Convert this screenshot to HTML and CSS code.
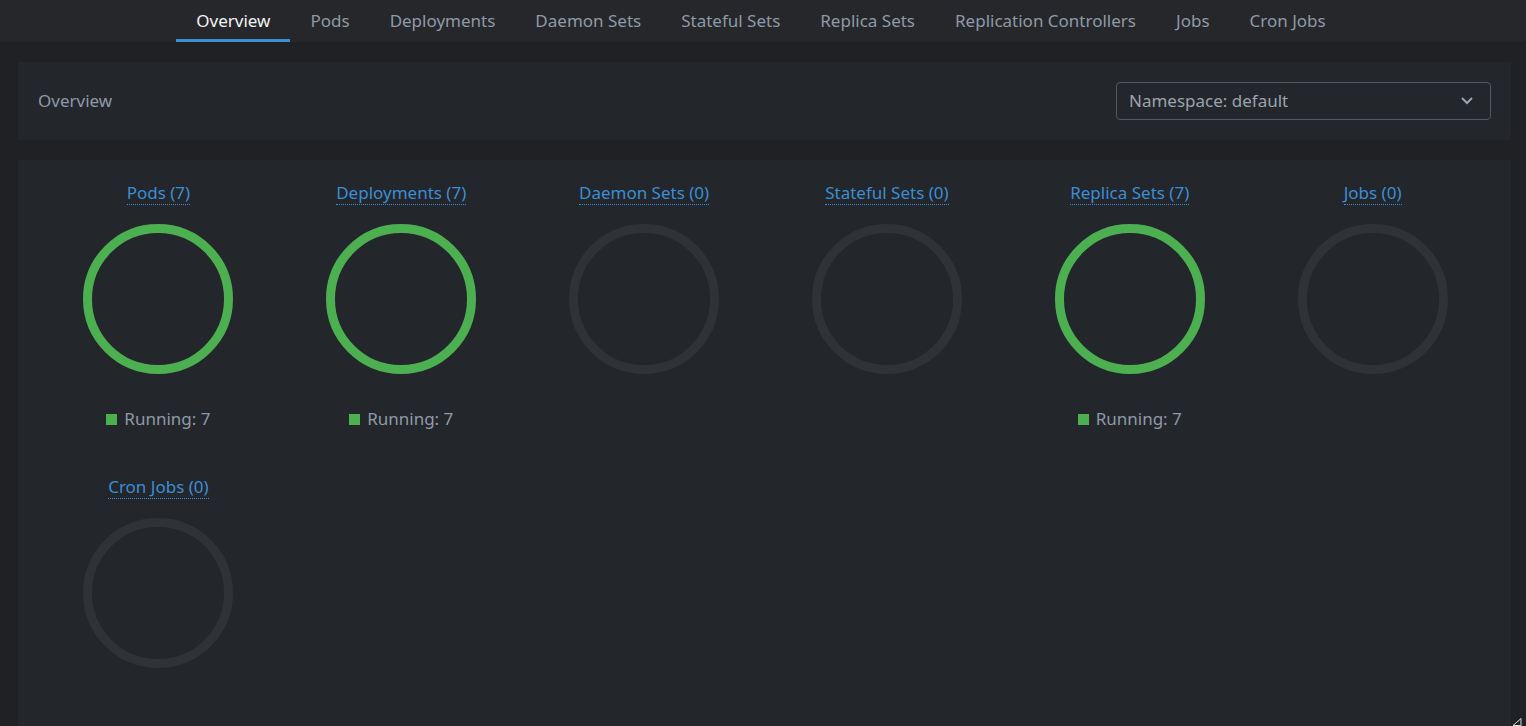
FILE: index.html
```html
<!DOCTYPE html>
<html lang="en">
<head>
<meta charset="utf-8">
<title>Workloads Overview</title>
<link rel="stylesheet" href="styles.css">
</head>
<body>
<nav class="tabs">
  <a class="tab active">Overview</a>
  <a class="tab">Pods</a>
  <a class="tab">Deployments</a>
  <a class="tab">Daemon Sets</a>
  <a class="tab">Stateful Sets</a>
  <a class="tab">Replica Sets</a>
  <a class="tab">Replication Controllers</a>
  <a class="tab">Jobs</a>
  <a class="tab">Cron Jobs</a>
</nav>
<main class="content">
  <section class="panel header">
    <div class="title">Overview</div>
    <div class="select">
      <span>Namespace: default</span>
      <svg class="chev" width="14" height="9" viewBox="0 0 14 9"><path d="M2 2 L7 7 L12 2" fill="none" stroke="#9aa4ae" stroke-width="2"/></svg>
    </div>
  </section>
  <section class="panel charts">
    <div class="cell">
      <a class="ctitle">Pods (7)</a>
      <svg class="ring" width="152" height="152" viewBox="0 0 152 152"><circle cx="76" cy="76" r="70.5" class="ok"/></svg>
      <div class="legend"><i class="dot"></i>Running: 7</div>
    </div>
    <div class="cell">
      <a class="ctitle">Deployments (7)</a>
      <svg class="ring" width="152" height="152" viewBox="0 0 152 152"><circle cx="76" cy="76" r="70.5" class="ok"/></svg>
      <div class="legend"><i class="dot"></i>Running: 7</div>
    </div>
    <div class="cell">
      <a class="ctitle">Daemon Sets (0)</a>
      <svg class="ring" width="152" height="152" viewBox="0 0 152 152"><circle cx="76" cy="76" r="70.5" class="empty"/></svg>
    </div>
    <div class="cell">
      <a class="ctitle">Stateful Sets (0)</a>
      <svg class="ring" width="152" height="152" viewBox="0 0 152 152"><circle cx="76" cy="76" r="70.5" class="empty"/></svg>
    </div>
    <div class="cell">
      <a class="ctitle">Replica Sets (7)</a>
      <svg class="ring" width="152" height="152" viewBox="0 0 152 152"><circle cx="76" cy="76" r="70.5" class="ok"/></svg>
      <div class="legend"><i class="dot"></i>Running: 7</div>
    </div>
    <div class="cell">
      <a class="ctitle">Jobs (0)</a>
      <svg class="ring" width="152" height="152" viewBox="0 0 152 152"><circle cx="76" cy="76" r="70.5" class="empty"/></svg>
    </div>
    <div class="cell">
      <a class="ctitle">Cron Jobs (0)</a>
      <svg class="ring" width="152" height="152" viewBox="0 0 152 152"><circle cx="76" cy="76" r="70.5" class="empty"/></svg>
    </div>
  </section>
</main>
<svg class="grip" width="10" height="8" viewBox="0 0 10 8"><path d="M9 0.5 L9 7.5 L1 7.5 Z" fill="none" stroke="#d8dadc" stroke-width="1"/></svg>
</body>
</html>
```
FILE: styles.css
```css
html, body {
  margin: 0;
  padding: 0;
  background: #1f2125;
  font-family: "Noto Sans", "Open Sans", sans-serif;
  font-size: 17px;
  overflow: hidden;
}

.tabs {
  height: 42px;
  background: #26272a;
  display: flex;
  justify-content: center;
  box-sizing: border-box;
  padding-right: 4px;
}

.tab {
  display: flex;
  align-items: center;
  padding: 0 20px;
  color: #8e9aa7;
  border-bottom: 3px solid transparent;
  border-top: 2px solid transparent;
  box-sizing: border-box;
  height: 42px;
  line-height: 22px;
  cursor: pointer;
}

.tab.active {
  color: #f2f3f4;
  border-bottom-color: #3d8fd6;
}

.content {
  display: flex;
  flex-direction: column;
  gap: 20px;
  padding: 20px 15px 0 18px;
}

.panel {
  background: #23262b;
}

.header {
  height: 78px;
  display: flex;
  align-items: center;
  justify-content: space-between;
  padding: 0 20px;
  box-sizing: border-box;
}

.title {
  color: #8e9aa7;
  line-height: 22px;
}

.select {
  width: 375px;
  height: 38px;
  box-sizing: border-box;
  border: 1px solid #55595f;
  border-radius: 4px;
  display: flex;
  align-items: center;
  justify-content: space-between;
  padding: 0 16px 1px 12px;
  color: #9aa4ae;
}

.chev {
  display: block;
}

.charts {
  display: grid;
  grid-template-columns: repeat(6, 1fr);
  grid-auto-rows: 248px;
  row-gap: 46px;
  padding: 22px 17px 22px 19px;
}

.cell {
  display: flex;
  flex-direction: column;
  align-items: center;
}

.ctitle {
  color: #3b8ed4;
  line-height: 22px;
  border-bottom: 1px dotted #3b8ed4;
  cursor: pointer;
}

.ring {
  display: block;
  margin-top: 18px;
}

.ring circle {
  fill: none;
  stroke-width: 9;
}

.ring .ok {
  stroke: #4caf50;
}

.ring .empty {
  stroke: #2f3237;
}

.legend {
  margin-top: 33px;
  display: flex;
  align-items: center;
  gap: 7px;
  color: #8e9aa7;
  line-height: 22px;
}

.dot {
  display: block;
  width: 11px;
  height: 11px;
  background: #4caf50;
}

.grip {
  position: fixed;
  right: 4px;
  bottom: 0;
}
```
